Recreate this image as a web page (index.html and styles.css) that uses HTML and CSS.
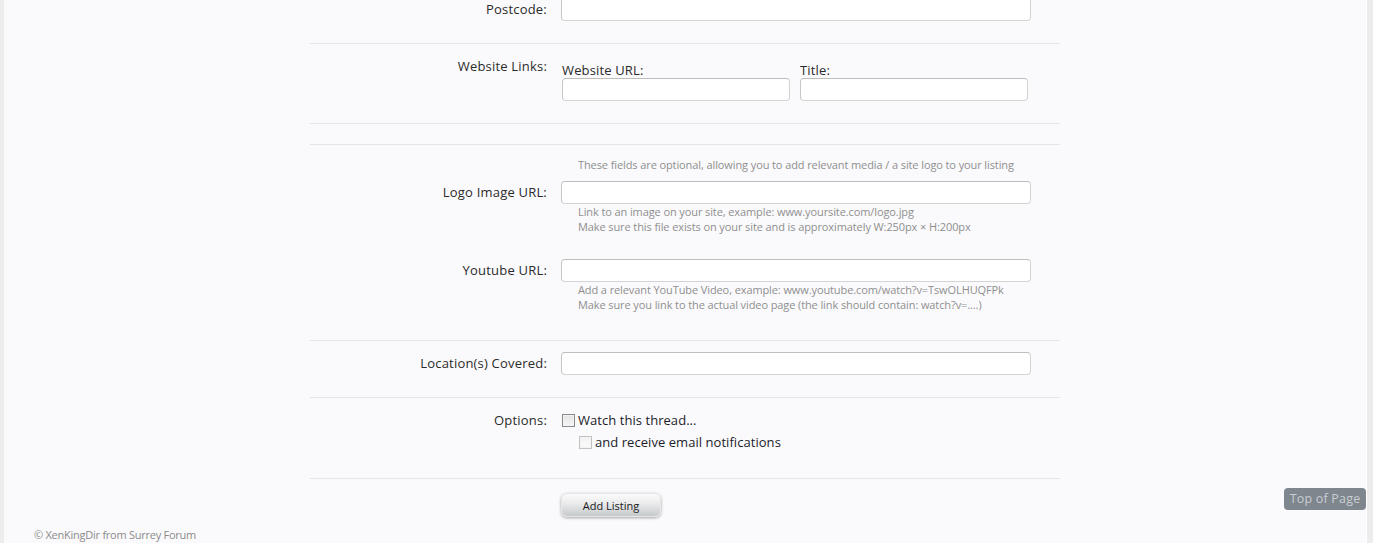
FILE: index.html
```html
<!DOCTYPE html>
<html>
<head>
<meta charset="utf-8">
<link rel="stylesheet" href="styles.css">
</head>
<body>
<div class="page">
  <form class="form">
    <div class="row row-postcode">
      <div class="label lbl-input">Postcode:</div>
      <div class="field"><input class="text" type="text"></div>
    </div>
    <div class="row row-links">
      <div class="label lbl-links">Website Links:</div>
      <div class="field links">
        <div class="linkcol">
          <div class="sublabel">Website URL:</div>
          <input class="text narrow" type="text">
        </div>
        <div class="linkcol">
          <div class="sublabel">Title:</div>
          <input class="text narrow" type="text">
        </div>
      </div>
    </div>
    <div class="row row-empty"></div>
    <div class="row row-media">
      <div class="sub">
        <div class="label"></div>
        <div class="field"><p class="hint intro">These fields are optional, allowing you to add relevant media / a site logo to your listing</p></div>
      </div>
      <div class="sub sub-logo">
        <div class="label lbl-input">Logo Image URL:</div>
        <div class="field">
          <input class="text" type="text">
          <p class="hint">Link to an image on your site, example: www.yoursite.com/logo.jpg<br>Make sure this file exists on your site and is approximately W:250px × H:200px</p>
        </div>
      </div>
      <div class="sub sub-yt">
        <div class="label lbl-input">Youtube URL:</div>
        <div class="field">
          <input class="text" type="text">
          <p class="hint">Add a relevant YouTube Video, example: www.youtube.com/watch?v=TswOLHUQFPk<br>Make sure you link to the actual video page (the link should contain: watch?v=....)</p>
        </div>
      </div>
    </div>
    <div class="row row-location">
      <div class="label lbl-input">Location(s) Covered:</div>
      <div class="field"><input class="text" type="text"></div>
    </div>
    <div class="row row-options">
      <div class="label lbl-opt">Options:</div>
      <div class="field">
        <label class="check"><span class="box"></span>Watch this thread...</label>
        <label class="check indent"><span class="box box-disabled"></span>and receive email notifications</label>
      </div>
    </div>
    <div class="row row-submit">
      <div class="label"></div>
      <div class="field"><button type="button" class="button">Add Listing</button></div>
    </div>
  </form>
  <div class="footer">© XenKingDir from Surrey Forum</div>
</div>
<a class="topofpage">Top of Page</a>
</body>
</html>
```

FILE: styles.css
```css
html, body {
  margin: 0;
  padding: 0;
  background: #ececec;
  height: 100%;
  overflow: hidden;
}
body {
  font-family: "Open Sans", "DejaVu Sans", sans-serif;
  color: #2b2b2b;
}
.page {
  margin: 0 6px 0 4px;
  background: #fafafc;
  min-height: 600px;
  border-right: 1px solid #ffffff;
}
.form {
  width: 750px;
  margin: -12px auto 0;
}
.row {
  display: flex;
  border-bottom: 1px solid #e3e6e9;
}
.label {
  text-align: right;
  font-size: 13px;
  letter-spacing: 0.2px;
  padding-right: 14px;
  box-sizing: border-box;
  width: 251px;
  flex: 0 0 251px;
}
.field {
  flex: 1;
}
.lbl-input {
  line-height: 23px;
}
.text {
  display: block;
  box-sizing: border-box;
  width: 470px;
  height: 23px;
  margin: 0;
  padding: 2px 4px;
  background: #ffffff;
  border: 1px solid #d4d4d4;
  border-top-color: #bdbdbd;
  border-left-color: #c6c6c6;
  border-radius: 4px;
  font: inherit;
}
.row-postcode {
  padding: 10px 0 22px;
}
.row-links {
  padding: 13px 0 22px;
}
.lbl-links {
  line-height: 18px;
}
.links {
  display: flex;
  gap: 10px;
  padding-top: 5px;
}
.linkcol {
  width: 228px;
}
.sublabel {
  font-size: 13px;
  letter-spacing: 0.15px;
  line-height: 16px;
  padding-left: 1px;
}
.text.narrow {
  width: 228px;
  margin-left: 1px;
}
.row-empty {
  height: 20px;
}
.row-media {
  display: block;
  padding: 12px 0 28px;
}
.sub {
  display: flex;
}
.sub-logo {
  margin-top: 9px;
}
.sub-yt {
  margin-top: 25px;
}
.hint {
  margin: 0;
  padding-left: 17px;
  font-size: 11px;
  line-height: 15px;
  color: #8f8f8f;
  letter-spacing: -0.1px;
  white-space: nowrap;
}
.row-location {
  padding: 11px 0 22px;
}
.row-options {
  padding: 13px 0 23px;
}
.lbl-opt {
  line-height: 18px;
}
.check {
  display: flex;
  align-items: center;
  font-size: 13px;
  letter-spacing: 0.05px;
  line-height: 18px;
  height: 18px;
  margin-bottom: 4px;
  color: #1c1c2a;
}
.check.indent {
  margin-left: 17px;
}
.box {
  display: inline-block;
  box-sizing: border-box;
  width: 13px;
  height: 13px;
  margin: 0 3px 0 1px;
  border: 1px solid #8a8a8a;
  background: linear-gradient(#e4e4e4, #f6f6f6);
  box-shadow: inset 0 0 0 1px #f2f2f2;
}
.box-disabled {
  border-color: #c2c2c2;
  background: linear-gradient(#f2f2f2, #fbfbfb);
}
.row-submit {
  border-bottom: none;
  padding-top: 14px;
}
.button {
  display: block;
  width: 100px;
  height: 24px;
  margin: 0;
  border: 1px solid #e6e6e6;
  border-radius: 6px;
  background: linear-gradient(#fbfbfb, #e9eaeb 45%, #c6c9cc);
  box-shadow: 0 1px 3px rgba(0, 0, 0, 0.35);
  font-family: inherit;
  font-size: 11px;
  color: #1a1a1a;
  padding: 0;
}
.footer {
  padding: 11px 0 0 30px;
  font-size: 11px;
  line-height: 14px;
  letter-spacing: -0.25px;
  color: #8b8b8b;
}
.topofpage {
  position: fixed;
  right: 7px;
  bottom: 33px;
  width: 82px;
  height: 22px;
  box-sizing: border-box;
  background: #7e868e;
  border-radius: 4px;
  color: #c9cdd2;
  font-size: 12.5px;
  line-height: 22px;
  text-align: center;
  letter-spacing: 0.2px;
}
```
